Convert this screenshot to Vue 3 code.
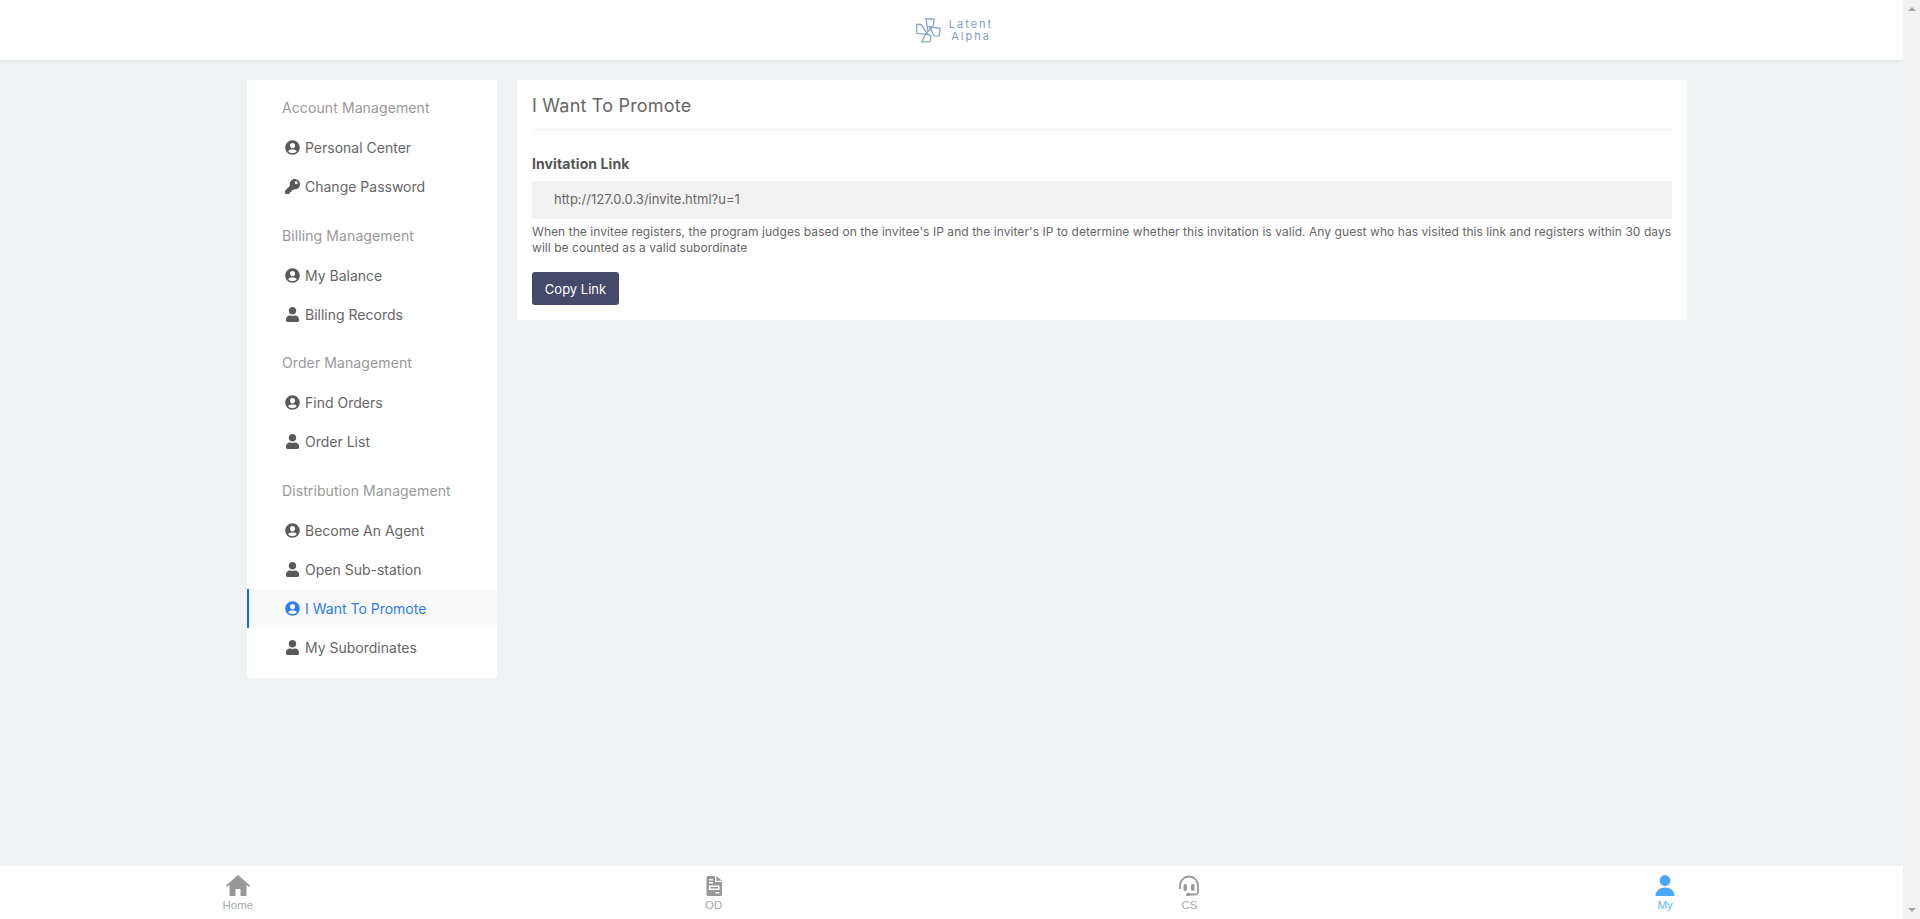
<script setup>
const groups = [
  {
    title: "Account Management",
    items: [
      { label: "Personal Center", icon: "circle" },
      { label: "Change Password", icon: "key" },
    ],
  },
  {
    title: "Billing Management",
    items: [
      { label: "My Balance", icon: "circle" },
      { label: "Billing Records", icon: "user" },
    ],
  },
  {
    title: "Order Management",
    items: [
      { label: "Find Orders", icon: "circle" },
      { label: "Order List", icon: "user" },
    ],
  },
  {
    title: "Distribution Management",
    items: [
      { label: "Become An Agent", icon: "circle" },
      { label: "Open Sub-station", icon: "user" },
      { label: "I Want To Promote", icon: "circle", active: true },
      { label: "My Subordinates", icon: "user" },
    ],
  },
];

const tabs = [
  { label: "Home", icon: "home" },
  { label: "OD", icon: "doc" },
  { label: "CS", icon: "headset" },
  { label: "My", icon: "me", active: true },
];
</script>

<template>
  <div class="page">
    <div class="viewport">
      <header class="topbar">
        <div class="logo">
          <svg class="logo-mark" viewBox="0 0 25 25" fill="none" stroke="#7f9ccf" stroke-width="1.2">
            <path d="M10 .7 18.300 1.300 16.700 9 12 13.500z" />
            <path d="M13 8.500 24 10.300 23.300 18 18.300 18z" />
            <path d="M5.700 24 14 23.700 15 18 10 15.300z" />
            <path d="M.6 6.300 5 6.300 12 16.500 .9 15.300z" />
          </svg>
          <div class="logo-text">
            <span>Latent</span>
            <span>Alpha</span>
          </div>
        </div>
      </header>

      <main class="content">
        <aside class="sidebar">
          <section v-for="group in groups" :key="group.title" class="group">
            <h3 class="group-title">{{ group.title }}</h3>
            <a
              v-for="item in group.items"
              :key="item.label"
              :class="['menu-item', { 'menu-item--active': item.active }]"
            >
              <svg v-if="item.icon === 'circle'" class="menu-icon" viewBox="0 0 496 512" fill="currentColor">
                <path d="M248 8C111 8 0 119 0 256s111 248 248 248 248-111 248-248S385 8 248 8zm0 96c48.600 0 88 39.400 88 88s-39.400 88-88 88-88-39.400-88-88 39.400-88 88-88zm0 344c-58.700 0-111.300-26.600-146.500-68.200 18.800-35.400 55.600-59.800 98.500-59.800 2.400 0 4.800.4 7.100 1.100 13 4.200 26.600 6.900 40.900 6.900 14.300 0 28-2.700 40.900-6.900 2.300-.7 4.700-1.100 7.100-1.100 42.900 0 79.700 24.400 98.500 59.800C359.300 421.400 306.700 448 248 448z" />
              </svg>
              <svg v-else-if="item.icon === 'key'" class="menu-icon" viewBox="0 0 512 512" fill="currentColor">
                <path d="M512 176.001C512 273.203 433.202 352 336 352c-11.220 0-22.190-1.062-32.827-3.069l-24.012 27.014A23.999 23.999 0 0 1 261.223 384H224v40c0 13.255-10.745 24-24 24h-40v40c0 13.255-10.745 24-24 24H24c-13.255 0-24-10.745-24-24v-78.059c0-6.365 2.529-12.470 7.029-16.971l161.802-161.802C163.108 213.814 160 195.271 160 176 160 78.798 238.797.001 335.999 0 433.488-.001 512 78.511 512 176.001zM336 128c0 26.510 21.490 48 48 48s48-21.490 48-48-21.490-48-48-48-48 21.490-48 48z" />
              </svg>
              <svg v-else class="menu-icon" viewBox="0 0 448 512" fill="currentColor">
                <path d="M224 256c70.700 0 128-57.300 128-128S294.700 0 224 0 96 57.300 96 128s57.300 128 128 128zm89.600 32h-16.700c-22.200 10.200-46.900 16-72.900 16s-50.600-5.800-72.900-16h-16.700C60.200 288 0 348.200 0 422.400V464c0 26.500 21.500 48 48 48h352c26.500 0 48-21.500 48-48v-41.600c0-74.200-60.200-134.400-134.400-134.400z" />
              </svg>
              <span>{{ item.label }}</span>
            </a>
          </section>
        </aside>

        <section class="card">
          <h2 class="card-title">I Want To Promote</h2>
          <div class="field">
            <label class="field-label">Invitation Link</label>
            <div class="link-box">http://127.0.0.3/invite.html?u=1</div>
            <p class="hint">
              When the invitee registers, the program judges based on the invitee's IP and the inviter's IP to determine whether this invitation is valid. Any guest who has visited this link and registers within 30 days will be counted as a valid subordinate
            </p>
            <button class="copy-btn">Copy Link</button>
          </div>
        </section>
      </main>

      <nav class="tabbar">
        <a v-for="tab in tabs" :key="tab.label" :class="['tab', { 'tab--active': tab.active }]">
          <svg v-if="tab.icon === 'home'" class="tab-icon" viewBox="0 0 24 22" fill="currentColor">
            <path d="M12 0 24 10.500 23 12 20.500 10V21H14.500V14H9.500V21H3.500V10L1 12 0 10.500z" />
          </svg>
          <svg v-else-if="tab.icon === 'doc'" class="tab-icon" viewBox="0 0 24 22" fill="currentColor">
            <path fill-rule="evenodd" d="M6 1H13V7H20V19.500A1.500 1.500 0 0 1 18.500 21H6A1.500 1.500 0 0 1 4.500 19.500V2.500A1.500 1.500 0 0 1 6 1zM7 4V5.500H11V4zM7 7V8.500H11V7zM7 10.500V15H17.500V10.500zM8.500 12H16V13.500H8.500zM13.500 17V18.500H17.500V17z" />
            <path d="M14.500 1 20 5.800H14.500z" />
          </svg>
          <svg v-else-if="tab.icon === 'headset'" class="tab-icon" viewBox="0 0 24 22">
            <path d="M3 14V10.500a9 9 0 0 1 18 0V17a2.500 2.500 0 0 1-2.500 2.500H12" fill="none" stroke="currentColor" stroke-width="1.800" />
            <rect x="6.500" y="9" width="3.500" height="7" rx="1.700" fill="currentColor" />
            <rect x="14" y="9" width="3.500" height="7" rx="1.700" fill="currentColor" />
            <rect x="9" y="18" width="4.500" height="3" rx="1.500" fill="currentColor" />
          </svg>
          <svg v-else class="tab-icon" viewBox="0 0 24 22" fill="currentColor">
            <circle cx="12" cy="5.500" r="5.400" />
            <path d="M2.500 21C2.500 15.500 7 12.500 12 12.500S21.500 15.500 21.500 21z" />
          </svg>
          <span class="tab-label">{{ tab.label }}</span>
        </a>
      </nav>
    </div>

    <div class="scrollbar">
      <span class="arrow arrow--up"></span>
      <span class="arrow arrow--down"></span>
    </div>
  </div>
</template>

<style>
html,
body {
  margin: 0;
  height: 100%;
  overflow: hidden;
}
</style>

<style scoped>
.page {
  display: flex;
  height: 919px;
  font-family: Inter, "Liberation Sans", sans-serif;
  color: #666;
}

.viewport {
  flex: 1;
  display: flex;
  flex-direction: column;
  min-width: 0;
  background: #eff3f4;
}

/* header */
.topbar {
  height: 60px;
  flex: none;
  display: flex;
  justify-content: center;
  align-items: center;
  background: #fff;
  box-shadow: 0 1px 4px rgba(0, 0, 0, 0.08);
}

.logo {
  display: flex;
  align-items: center;
  gap: 8px;
  margin-left: 6px;
}

.logo-mark {
  width: 25px;
  height: 25px;
}

.logo-text {
  display: flex;
  flex-direction: column;
  align-items: center;
  font-size: 11px;
  line-height: 12px;
  letter-spacing: 2px;
  color: #7f9ccf;
}

/* body */
.content {
  flex: 1;
  display: flex;
  align-items: flex-start;
  gap: 20px;
  padding: 20px 0 0 247px;
}

.sidebar {
  width: 250px;
  height: 598px;
  box-sizing: border-box;
  padding-top: 8px;
  background: #fff;
  border-radius: 3px;
}

.group {
  margin-bottom: 9.7px;
}

.group-title {
  margin: 0;
  padding-left: 35px;
  height: 40px;
  font-size: 14px;
  font-weight: 400;
  line-height: 40px;
  letter-spacing: 0.1px;
  color: #999;
}

.menu-item {
  display: flex;
  align-items: center;
  height: 39px;
  padding-left: 38px;
  font-size: 14px;
  color: #666;
}

.menu-icon {
  width: 15px;
  height: 15px;
  margin-right: 5px;
  color: #5a5a5a;
}

.menu-item--active {
  padding-left: 36px;
  border-left: 2px solid #0d6efd;
  background: #fafafa;
  color: #2e7cf6;
}

.menu-item--active .menu-icon {
  color: #2e7cf6;
}

.card {
  width: 1170px;
  box-sizing: border-box;
  height: 240px;
  padding: 0 15px;
  background: #fff;
  border-radius: 3px;
}

.card-title {
  margin: 0;
  height: 49px;
  border-bottom: 1px solid #f1f1f1;
  font-size: 18px;
  font-weight: 400;
  line-height: 51px;
  letter-spacing: 0.2px;
  color: #666;
}

.field {
  padding-top: 24px;
}

.field-label {
  display: block;
  font-size: 14px;
  font-weight: 700;
  line-height: 20px;
  letter-spacing: 0.1px;
  color: #555;
}

.link-box {
  margin-top: 7px;
  height: 38px;
  padding-left: 22px;
  background: #f2f2f2;
  font-size: 13px;
  line-height: 36px;
  color: #666;
}

.hint {
  margin: 5px 0 0;
  font-size: 12px;
  line-height: 16px;
  letter-spacing: 0.06px;
  color: #666;
}

.copy-btn {
  display: block;
  margin-top: 16px;
  width: 87px;
  height: 33px;
  padding: 0;
  border: none;
  border-radius: 3px;
  background: #454a6a;
  color: #fff;
  font-family: inherit;
  font-size: 13px;
}

/* bottom tabs */
.tabbar {
  height: 53px;
  flex: none;
  display: flex;
  background: #fff;
}

.tab {
  flex: 1;
  display: flex;
  flex-direction: column;
  align-items: center;
  padding-top: 9px;
  color: #999;
}

.tab--active {
  color: #4aa8f8;
}

.tab-icon {
  width: 24px;
  height: 22px;
}

.tab-label {
  margin-top: 1px;
  font-family: "Liberation Sans", sans-serif;
  font-size: 11.500px;
  line-height: 15px;
  opacity: 0.85;
}

/* always-on scrollbar */
.scrollbar {
  flex: none;
  width: 17px;
  display: flex;
  flex-direction: column;
  justify-content: space-between;
  align-items: center;
  padding: 7px 0;
  box-sizing: border-box;
  background: #f1f1f1;
}

.arrow {
  width: 0;
  height: 0;
  border-left: 4px solid transparent;
  border-right: 4px solid transparent;
}

.arrow--up {
  border-bottom: 4px solid #a3a3a3;
}

.arrow--down {
  border-top: 4px solid #a3a3a3;
}
</style>
